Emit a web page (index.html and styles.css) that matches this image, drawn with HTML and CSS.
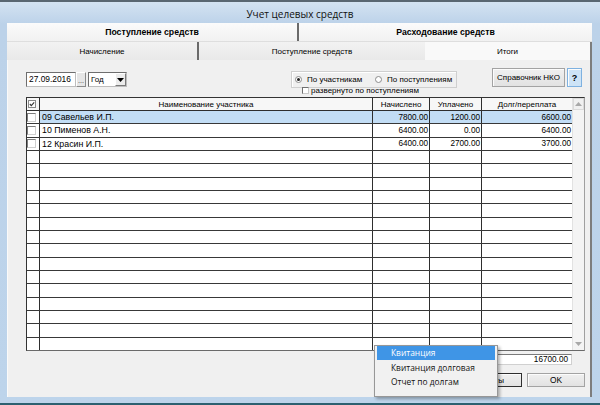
FILE: index.html
```html
<!DOCTYPE html>
<html lang="ru">
<head>
<meta charset="utf-8">
<title>Учет целевых средств</title>
<link rel="stylesheet" href="styles.css">
</head>
<body>
<div class="window">
  <div class="titlebar">Учет целевых средств</div>
  <div class="frame">
    <div class="client">
      <div class="tabs-main">
        <div class="tab tab-a">Поступление средств</div>
        <div class="tab tab-b">Расходование средств</div>
      </div>
      <div class="tabs-sub">
        <div class="stab s1">Начисление</div>
        <div class="stab s2">Поступление средств</div>
        <div class="stab s3">Итоги</div>
      </div>
      <div class="panel">
        <div class="toolbar">
          <div class="dategroup">
            <div class="date">27.09.2016</div>
            <div class="dots">...</div>
            <div class="select"><span class="sel-text">Год</span><span class="sel-btn"><svg width="7" height="4" viewBox="0 0 7 4"><path d="M0 0h7L3.5 4z" fill="#000"/></svg></span></div>
          </div>
          <div class="radiobox">
            <div class="rgroup">
              <div class="ropt first"><span class="radio on"></span><span>По участникам</span></div>
              <div class="ropt"><span class="radio"></span><span>По поступлениям</span></div>
            </div>
            <div class="chkrow"><span class="chk-small"></span><span>развернуто по поступлениям</span></div>
          </div>
          <div class="btns">
            <div class="btn btn-nko">Справочник НКО</div>
            <div class="btn btn-q">?</div>
          </div>
        </div>

        <div class="grid">
          <div class="cols">
            <div class="row head">
              <i class="c0"><svg width="8" height="8" viewBox="0 0 8 8"><rect x="0.5" y="0.5" width="7" height="7" fill="#fff" stroke="#8a8a8a"/><path d="M1.8 4l1.5 1.6L6.2 2.4" fill="none" stroke="#333" stroke-width="1.1"/></svg></i>
              <i>Наименование участника</i><i>Начислено</i><i>Уплачено</i><i>Долг/переплата</i>
            </div>
            <div class="row sel"><i class="c0"><span class="cb"></span></i><i class="name">09 Савельев И.П.</i><i class="num">7800.00</i><i class="num">1200.00</i><i class="num">6600.00</i></div>
            <div class="row"><i class="c0"><span class="cb"></span></i><i class="name">10 Пименов А.Н.</i><i class="num">6400.00</i><i class="num">0.00</i><i class="num">6400.00</i></div>
            <div class="row"><i class="c0"><span class="cb"></span></i><i class="name">12 Красин И.П.</i><i class="num">6400.00</i><i class="num">2700.00</i><i class="num">3700.00</i></div>
            <div class="row"><i class="c0"></i><i></i><i></i><i></i><i></i></div>
            <div class="row"><i class="c0"></i><i></i><i></i><i></i><i></i></div>
            <div class="row"><i class="c0"></i><i></i><i></i><i></i><i></i></div>
            <div class="row"><i class="c0"></i><i></i><i></i><i></i><i></i></div>
            <div class="row"><i class="c0"></i><i></i><i></i><i></i><i></i></div>
            <div class="row"><i class="c0"></i><i></i><i></i><i></i><i></i></div>
            <div class="row"><i class="c0"></i><i></i><i></i><i></i><i></i></div>
            <div class="row"><i class="c0"></i><i></i><i></i><i></i><i></i></div>
            <div class="row"><i class="c0"></i><i></i><i></i><i></i><i></i></div>
            <div class="row"><i class="c0"></i><i></i><i></i><i></i><i></i></div>
            <div class="row"><i class="c0"></i><i></i><i></i><i></i><i></i></div>
            <div class="row"><i class="c0"></i><i></i><i></i><i></i><i></i></div>
            <div class="row"><i class="c0"></i><i></i><i></i><i></i><i></i></div>
            <div class="row"><i class="c0"></i><i></i><i></i><i></i><i></i></div>
            <div class="row last"><i class="c0"></i><i></i><i></i><i></i><i></i></div>
          </div>
          <div class="scroll">
            <div class="arrow up"><svg width="7" height="4" viewBox="0 0 7 4"><path d="M0 4h7L3.5 0z" fill="#a8a8a8"/></svg></div>
            <div class="arrow down"><svg width="7" height="4" viewBox="0 0 7 4"><path d="M0 0h7L3.5 4z" fill="#a8a8a8"/></svg></div>
          </div>
        </div>

        <div class="totalrow"><div class="total">16700.00</div></div>
        <div class="actions">
          <div class="btn btn-doc">Документы</div>
          <div class="btn btn-ok">OK</div>
        </div>
      </div>
    </div>
  </div>
  <div class="taskbar"></div>
  <div class="menu">
    <div class="mi hi">Квитанция</div>
    <div class="mi">Квитанция долговая</div>
    <div class="mi">Отчет по долгам</div>
  </div>
</div>
</body>
</html>
```

FILE: styles.css
```css
* { box-sizing: border-box; }
html, body { margin: 0; padding: 0; }
body {
  width: 600px;
  height: 405px;
  overflow: hidden;
  font-family: "Liberation Sans", Arial, sans-serif;
  font-size: 8px;
  color: #000;
  background: #2d6070;
}
.window {
  position: relative;
  width: 600px;
  height: 405px;
  display: flex;
  flex-direction: column;
  border-top: 2px solid #5a6772;
  background: linear-gradient(#d4e3f2, #bcd2e9 22px, #bdd4eb);
}
.titlebar {
  height: 21px;
  display: flex;
  align-items: center;
  justify-content: center;
  padding-top: 2px;
  font-family: "Open Sans", "Noto Sans", sans-serif;
  font-size: 10px;
  color: #111;
}
.frame {
  flex: 1;
  display: flex;
  padding: 0 8px 6px 7px;
}
.client {
  flex: 1;
  display: flex;
  flex-direction: column;
  background: #f0f0f0;
}
.taskbar { height: 2px; background: #2d6070; }

/* main tabs */
.tabs-main {
  height: 19px;
  display: flex;
  background: linear-gradient(#fbfbfb, #f1f1f1);
  border-bottom: 1px solid #dedede;
  font-weight: bold;
  font-size: 8.7px;
}
.tab { display: flex; align-items: center; justify-content: center; }
.tab-a { width: 292px; border-right: 2px solid #6a6a6a; }
.tab-b { flex: 1; }

/* sub tabs */
.tabs-sub {
  height: 18px;
  display: flex;
  background: linear-gradient(#f2f2f2, #e9e9e9);
  border-right: 2px solid #7d7d7d;
}
.stab { display: flex; align-items: center; justify-content: center; }
.s1 { width: 192px; border-right: 2px solid #6a6a6a; }
.s2 { width: 226px; }
.s3 { flex: 1; background: #f9f9f9; }

/* panel */
.panel {
  flex: 1;
  display: flex;
  flex-direction: column;
  padding: 0 5px 0 18px;
  border-right: 2px solid #7d7d7d;
  border-left: 1px solid #fafafa;
}
.toolbar {
  height: 37px;
  display: flex;
  align-items: flex-start;
}
.dategroup { margin-top: 12px; display: flex; height: 15px; }
.date {
  width: 50px;
  height: 15px;
  background: #fff;
  border: 1px solid;
  border-color: #6e6e6e #bdbdbd #bdbdbd #6e6e6e;
  padding-left: 2px;
  line-height: 13px;
  font-size: 8.4px;
}
.dots {
  width: 10px;
  height: 15px;
  background: #e6e6e6;
  border: 1px solid;
  border-color: #fff #8a8a8a #8a8a8a #fff;
  line-height: 15px;
  text-align: center;
  font-size: 7px;
  color: #333;
}
.select {
  width: 39px;
  height: 15px;
  margin-left: 2px;
  display: flex;
  background: #fff;
  border: 1px solid;
  border-color: #6e6e6e #bdbdbd #bdbdbd #6e6e6e;
}
.sel-text { flex: 1; padding-left: 2px; line-height: 13px; }
.sel-btn {
  width: 11px;
  display: flex;
  align-items: center;
  justify-content: center;
  background: #ececec;
  border: 1px solid;
  border-color: #fff #7a7a7a #7a7a7a #fff;
}
.radiobox { margin-left: 164px; margin-top: 11px; }
.rgroup {
  width: 166px;
  height: 17px;
  display: flex;
  align-items: center;
  padding-left: 3px;
  border: 1px solid #cfcfcf;
  box-shadow: inset 1px 1px 0 #fff;
  font-size: 8px;
}
.ropt { display: flex; align-items: center; gap: 5px; white-space: nowrap; }
.ropt.first { width: 80px; }
.radio {
  width: 7px;
  height: 7px;
  border-radius: 50%;
  background: #fff;
  border: 1px solid #8c8c8c;
  position: relative;
}
.radio.on::after {
  content: "";
  position: absolute;
  left: 1px; top: 1px;
  width: 3px; height: 3px;
  border-radius: 50%;
  background: #222;
}
.chkrow {
  margin-top: -2px;
  padding-left: 11px;
  display: flex;
  align-items: center;
  gap: 2px;
  height: 9px;
  font-size: 8px;
}
.chk-small {
  width: 7px;
  height: 7px;
  background: #fff;
  border: 1px solid;
  border-color: #707070 #c8c8c8 #c8c8c8 #707070;
}
.btns { margin-left: auto; margin-right: 3px; margin-top: 8px; display: flex; gap: 2px; }
.btn {
  display: flex;
  align-items: center;
  justify-content: center;
  background: linear-gradient(#f0f0f0, #e2e2e2);
  border: 1px solid #a3a3a3;
  box-shadow: inset 1px 1px 0 #fcfcfc;
}
.btn-nko { width: 73px; height: 19px; }
.btn-q {
  width: 15px;
  height: 19px;
  font-weight: bold;
  font-size: 9px;
  background: #cde3f6;
  border-color: #7eb1e0;
}

/* grid */
.grid {
  display: flex;
  background: #fff;
  border: 1px solid #333;
  border-right-color: #a0a0a0;
  border-bottom: 1px solid #6a6a6a;
}
.cols { width: 545px; }
.row {
  display: grid;
  grid-template-columns: 13px 333px 57px 52px 90px;
  height: 13.33px;
  border-bottom: 1px solid #383838;
}
.row.last { border-bottom: none; height: 12.7px; }
.row i {
  font-style: normal;
  display: flex;
  align-items: center;
  border-right: 1px solid #2e2e2e;
  white-space: nowrap;
  overflow: hidden;
}
.row i:last-child { border-right: none; }
.row.head { height: 13px; background: #f7f7f7; border-bottom: 1px solid #2e2e2e; }
.row.head i { justify-content: center; }
.row.head i.c0 { justify-content: flex-start; padding-left: 1px; }
.cb {
  width: 9px;
  height: 9px;
  background: #fff;
  border: 1px solid;
  border-color: #7c7c7c #cfcfcf #cfcfcf #7c7c7c;
}
.name { padding-left: 2px; font-size: 8.8px; }
.num { justify-content: flex-end; padding-right: 1px; font-size: 8.2px; }
.row.sel i:not(.c0) { background: #c2ddf5; }
.scroll {
  flex: 1;
  display: flex;
  flex-direction: column;
  justify-content: space-between;
  background: #f4f4f4;
  border-left: 1px solid #e2e2e2;
}
.arrow {
  height: 12px;
  display: flex;
  align-items: center;
  justify-content: center;
}
.arrow.up { border: 1px solid #dadada; background: #f0f0f0; }

.totalrow { display: flex; justify-content: flex-end; margin-top: 3px; padding-right: 13px; }
.total {
  width: 80px;
  height: 11px;
  background: #fff;
  border: 1px solid;
  border-color: #7a7a7a #d0d0d0 #d0d0d0 #7a7a7a;
  text-align: right;
  padding-right: 3px;
  line-height: 9px;
  font-size: 8.2px;
}
.actions { display: flex; justify-content: flex-end; gap: 5px; margin-top: 8px; }
.btn-doc { width: 77px; height: 14px; border-color: #2e2e2e; }
.btn-ok { width: 58px; height: 14px; font-size: 8.4px; }

/* context menu */
.menu {
  position: absolute;
  left: 374px;
  top: 343px;
  width: 124px;
  height: 52px;
  padding: 0 2px;
  background: #f1f1f1;
  border: 1px solid #979797;
  box-shadow: 2px 2px 3px rgba(0, 0, 0, 0.3);
  font-family: "Open Sans", "Noto Sans", sans-serif;
  font-size: 8.4px;
}
.mi { height: 14.5px; line-height: 14.5px; padding-left: 14px; color: #111; }
.mi.hi { height: 13.5px; line-height: 13.5px; background: #3f95e6; color: #fff; margin-bottom: 1px; }
```
